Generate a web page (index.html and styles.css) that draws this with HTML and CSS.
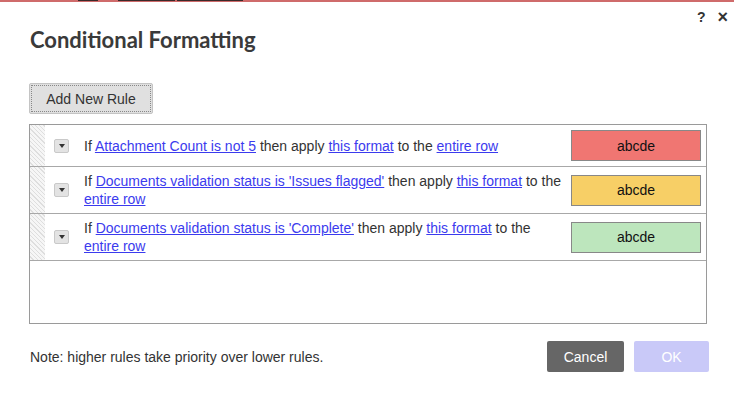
FILE: index.html
```html
<!DOCTYPE html>
<html lang="en">
<head>
    <meta charset="UTF-8">
    <meta name="viewport" content="width=device-width, initial-scale=1.0">
    <title>Conditional Formatting</title>
    <link rel="stylesheet" href="styles.css">
</head>
<body>
    <div class="top-strip">
        <span class="strip-bit bit-a"></span>
        <span class="strip-bit bit-b"></span>
        <span class="strip-bit bit-c"></span>
    </div>
    <div class="dialog">
        <div class="dialog-tools">
            <span class="tool">?</span>
            <span class="tool close">&times;</span>
        </div>
        <h1 class="dialog-title">Conditional Formatting</h1>

        <button class="btn-add">Add New Rule</button>

        <div class="rules">
            <div class="rule">
                <div class="rule-grip"></div>
                <div class="rule-menu"><span class="menu-btn"></span></div>
                <div class="rule-text">If <a href="#">Attachment Count is not 5</a> then apply <a href="#">this format</a> to the <a href="#">entire row</a></div>
                <div class="swatch swatch-red">abcde</div>
            </div>
            <div class="rule">
                <div class="rule-grip"></div>
                <div class="rule-menu"><span class="menu-btn"></span></div>
                <div class="rule-text">If <a href="#">Documents validation status is 'Issues flagged'</a> then apply <a href="#">this format</a> to the <a href="#">entire row</a></div>
                <div class="swatch swatch-yellow">abcde</div>
            </div>
            <div class="rule">
                <div class="rule-grip"></div>
                <div class="rule-menu"><span class="menu-btn"></span></div>
                <div class="rule-text">If <a href="#">Documents validation status is 'Complete'</a> then apply <a href="#">this format</a> to the <a href="#">entire row</a></div>
                <div class="swatch swatch-green">abcde</div>
            </div>
        </div>

        <div class="dialog-footer">
            <p class="note">Note: higher rules take priority over lower rules.</p>
            <div class="actions">
                <button class="btn btn-cancel">Cancel</button>
                <button class="btn btn-ok">OK</button>
            </div>
        </div>
    </div>
</body>
</html>
```

FILE: styles.css
```css
body {
    margin: 0;
    background-color: #fff;
    font-family: "Liberation Sans", Arial, sans-serif;
    color: #333;
}
.top-strip {
    display: flex;
    height: 2px;
    background-color: #cf6b6b;
    padding-left: 78px;
}
.strip-bit {
    height: 1px;
    background-color: #3a2a2a;
}
.bit-a {
    width: 20px;
}
.bit-b {
    width: 57px;
    margin-left: 20px;
}
.bit-c {
    width: 66px;
    margin-left: 2px;
}
.dialog {
    padding: 0 25px 0 29px;
}
.dialog-tools {
    display: flex;
    justify-content: flex-end;
    gap: 12px;
    height: 24px;
    padding-top: 5px;
    box-sizing: border-box;
    margin-right: -19px;
}
.tool {
    font-size: 14px;
    font-weight: bold;
    color: #333;
    line-height: 20px;
}
.close {
    font-size: 18px;
}
.dialog-title {
    margin: 0 0 0 1px;
    font-family: Lato, "Liberation Sans", sans-serif;
    font-size: 22px;
    font-weight: 700;
    color: #3a3a3a;
    line-height: 28px;
}
.btn-add {
    margin-top: 29px;
    width: 124px;
    height: 31px;
    font-family: "Liberation Sans", Arial, sans-serif;
    font-size: 14px;
    color: #333;
    background-color: #e0e0e0;
    border: 1px solid #c4c4c4;
    border-radius: 2px;
    outline: 1px dotted #888;
    outline-offset: -3px;
    padding: 0;
}
.rules {
    margin-top: 10px;
    width: 678px;
    height: 200px;
    box-sizing: border-box;
    border: 1px solid #9a9a9a;
}
.rule {
    display: flex;
    align-items: center;
    border-bottom: 1px solid #a8a8a8;
    min-height: 41px;
}
.rule-grip {
    align-self: stretch;
    width: 15px;
    background: repeating-linear-gradient(45deg, #f6f6f6 0 2px, #dedede 2px 3px);
}
.rule-menu {
    width: 39px;
    padding-left: 9px;
    box-sizing: border-box;
}
.menu-btn {
    display: flex;
    justify-content: center;
    align-items: center;
    width: 15px;
    height: 14px;
    box-sizing: border-box;
    background-color: #e3e3e3;
    border: 1px solid #c9c9c9;
    border-radius: 2px;
}
.menu-btn::after {
    content: "";
    border-left: 3px solid transparent;
    border-right: 3px solid transparent;
    border-top: 4px solid #333;
}
.rule-text {
    flex: 1;
    font-size: 14px;
    line-height: 18px;
    padding: 5px 8px 5px 0;
}
.rule-text a {
    color: #3b3bee;
}
.swatch {
    width: 130px;
    height: 31px;
    box-sizing: border-box;
    margin-right: 5px;
    border: 1px solid #888;
    font-size: 14px;
    color: #111;
    display: flex;
    justify-content: center;
    align-items: center;
}
.swatch-red {
    background-color: #f07672;
}
.swatch-yellow {
    background-color: #f7cf66;
}
.swatch-green {
    background-color: #bde6bd;
}
.dialog-footer {
    display: flex;
    justify-content: space-between;
    align-items: center;
    margin-top: 17px;
}
.note {
    margin: 0 0 0 1px;
    font-size: 14px;
    color: #333;
}
.actions {
    display: flex;
    gap: 10px;
}
.btn {
    height: 31px;
    border: none;
    border-radius: 2px;
    font-family: "Liberation Sans", Arial, sans-serif;
    font-size: 14px;
    color: #fff;
    padding: 0;
}
.btn-cancel {
    width: 77px;
    background-color: #666;
}
.btn-ok {
    width: 75px;
    background-color: #c9c9f8;
}
```
